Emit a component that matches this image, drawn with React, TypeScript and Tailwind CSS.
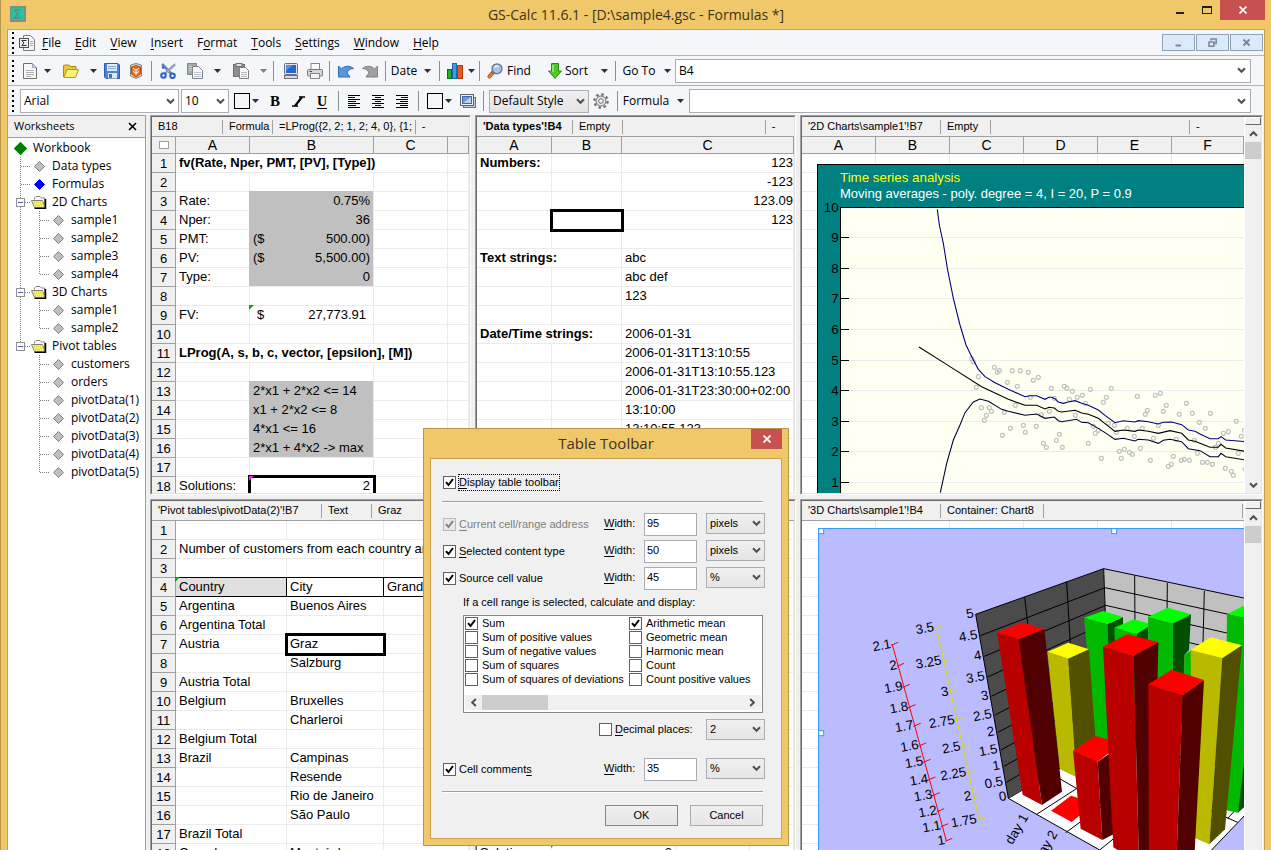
import type { ReactNode } from "react";

type CellData = {
  text?: string;
  span?: number;
  symbol?: string;
  className?: string;
  corner?: "green" | "magenta";
  selected?: boolean;
};
type Cell = string | CellData;

type Column = { label: string; width?: number };

const shade = "bg-[#c0c0c0] border-[#c0c0c0] shadow-[-1px_-1px_0_#c0c0c0]";
const heading = (text: string, span: number): CellData => ({ text, span, className: "font-bold" });
const right = (text: string, className = ""): CellData => ({ text, className: `text-right ${className}` });

const formulaRows: Cell[][] = [
  [heading("fv(Rate, Nper, PMT, [PV], [Type])", 3)],
  [],
  ["Rate:", right("0.75%", shade)],
  ["Nper:", right("36", shade)],
  ["PMT:", { symbol: "($", text: "500.00)", className: shade }],
  ["PV:", { symbol: "($", text: "5,500.00)", className: shade }],
  ["Type:", right("0", shade)],
  [],
  ["FV:", { symbol: "$", text: "27,773.91", corner: "green", className: "px-[7px]" }],
  [],
  [heading("LProg(A, s, b, c, vector, [epsilon], [M])", 3)],
  [],
  ["", { text: "2*x1 + 2*x2 <= 14", className: shade }],
  ["", { text: "x1 + 2*x2 <= 8", className: shade }],
  ["", { text: "4*x1 <= 16", className: shade }],
  ["", { text: "2*x1 + 4*x2 -> max", className: shade }],
  [],
  ["Solutions:", { text: "2", className: "text-right", corner: "magenta", selected: true }],
];

const flushRight = "text-right pr-0";

const dataTypeRows: Cell[][] = [
  [heading("Numbers:", 1), "", { text: "123", className: flushRight }],
  ["", "", { text: "-123", className: flushRight }],
  ["", "", { text: "123.09", className: flushRight }],
  ["", { selected: true }, { text: "123", className: flushRight }],
  [],
  [heading("Text strings:", 2), "abc"],
  ["", "", "abc def"],
  ["", "", "123"],
  [],
  [heading("Date/Time strings:", 2), "2006-01-31"],
  ["", "", "2006-01-31T13:10:55"],
  ["", "", "2006-01-31T13:10:55.123"],
  ["", "", "2006-01-31T23:30:00+02:00"],
  ["", "", "13:10:00"],
  ["", "", "13:10:55.123"],
  [],
  [],
  [],
];

const blackEdge = "border-b-black shadow-[0_-1px_0_black]";

const pivotRows: Cell[][] = [
  [],
  [{ text: "Number of customers from each country and city", span: 3 }],
  [],
  [
    { text: "Country", corner: "green", className: `bg-[#e0e0e0] border-r-black ${blackEdge}` },
    { text: "City", className: `border-r-black ${blackEdge}` },
    { text: "Grand Total", className: blackEdge },
  ],
  ["Argentina", "Buenos Aires"],
  ["Argentina Total"],
  ["Austria", { text: "Graz", selected: true }],
  ["", "Salzburg"],
  ["Austria Total"],
  ["Belgium", "Bruxelles"],
  ["", "Charleroi"],
  ["Belgium Total"],
  ["Brazil", "Campinas"],
  ["", "Resende"],
  ["", "Rio de Janeiro"],
  ["", "São Paulo"],
  ["Brazil Total"],
  ["Canada", "Montréal"],
];

const blank = (length: number): Cell[][] => Array.from({ length }, () => []);

const solutionRows: Cell[][] = [
  ...blank(17),
  ["Solutions:", { text: "2", className: "text-right", corner: "green" }],
];

const chartColumns: Column[] = [
  { label: "A", width: 74 },
  { label: "B", width: 74 },
  { label: "C", width: 74 },
  { label: "D", width: 74 },
  { label: "E", width: 74 },
  { label: "F" },
];

function Sheet({
  columns,
  rows,
  header = true,
  numbers = false,
}: {
  columns: Column[];
  rows: Cell[][];
  header?: boolean;
  numbers?: boolean;
}) {
  const fill = (row: Cell[]) => {
    const cells: CellData[] = row.map((c) => (typeof c === "string" ? { text: c } : c));
    const used = cells.reduce((n, c) => n + (c.span ?? 1), 0);
    return [...cells, ...Array.from({ length: columns.length - used }, (): CellData => ({}))];
  };

  const padding = (className = "") => {
    if (className.includes("px-")) return "";
    return className.includes("pr-0") ? "pl-[3px]" : "px-[3px]";
  };

  return (
    <table className="w-full table-fixed border-separate border-spacing-0 text-[13px] leading-[15px]">
      <colgroup>
        {numbers && <col style={{ width: 24 }} />}
        {columns.map((c, i) => (
          <col key={i} style={c.width ? { width: c.width } : undefined} />
        ))}
      </colgroup>
      {header && (
        <thead>
          <tr className="h-[17px] bg-[#f0f0f0] text-[14px] leading-4">
            {numbers && (
              <th className="border-r border-b border-[#a0a0a0] p-0">
                <span className="mx-auto block h-2 w-2.5 border border-[#a0a0a0] bg-white" />
              </th>
            )}
            {columns.map((c, i) => (
              <th key={i} className="h-[17px] overflow-hidden border-r border-b border-[#a0a0a0] p-0 font-normal">
                {c.label}
              </th>
            ))}
          </tr>
        </thead>
      )}
      <tbody>
        {rows.map((row, r) => (
          <tr key={r} className="h-[19px]">
            {numbers && (
              <th className="h-[19px] border-r border-b border-[#a0a0a0] bg-[#f0f0f0] p-0 text-center leading-[17px] font-normal">
                {r + 1}
              </th>
            )}
            {fill(row).map((c, i) => (
              <td
                key={i}
                colSpan={c.span}
                className={`relative h-[19px] border-r border-b border-[#ebebeb] p-0 ${
                  c.selected ? "z-10 outline-3 -outline-offset-1 outline-black" : ""
                } ${padding(c.className)} ${c.className ?? ""}`}
              >
                <div className={`h-[17px] overflow-hidden whitespace-nowrap ${c.symbol ? "flex justify-between" : ""}`}>
                  {c.symbol && <span>{c.symbol}</span>}
                  {c.symbol ? <span>{c.text}</span> : c.text}
                </div>
                {c.corner && (
                  <svg className="absolute -top-px -left-px h-[5px] w-[5px]" viewBox="0 0 5 5">
                    <path d="M0 0H5L0 5Z" fill={c.corner === "green" ? "#00b000" : "#ff20e0"} />
                  </svg>
                )}
              </td>
            ))}
          </tr>
        ))}
      </tbody>
    </table>
  );
}

function Chevron({ className = "" }: { className?: string }) {
  return (
    <svg className={`h-[7px] w-[9px] shrink-0 ${className}`} viewBox="0 0 9 7">
      <path d="M1 1.2 4.500 4.800 8 1.200" fill="none" stroke="#505050" strokeWidth="2" />
    </svg>
  );
}

type Field = { text: string; className: string };

function InfoBar({ fields, tail = true }: { fields: Field[]; tail?: boolean }) {
  return (
    <div className="flex h-5 shrink-0 items-center overflow-hidden border-b border-[#a0a0a0] bg-[#f0f0f0] text-[11px] whitespace-nowrap">
      {fields.map((f, i) => (
        <div key={i} className={`h-[14px] shrink-0 border-r border-[#a0a0a0] pl-1.5 leading-[13px] ${f.className}`}>
          {f.text}
        </div>
      ))}
      {tail && <div className="pl-1.5">-</div>}
    </div>
  );
}

function VerticalScrollbar() {
  return (
    <div className="flex w-[17px] shrink-0 flex-col items-center border-l border-white bg-[#f0f0f0]">
      <div className="h-2 w-full border border-t-white border-r-[#696969] border-b-[#696969] border-l-white" />
      <button aria-label="Scroll up" className="flex h-[17px] w-full items-center justify-center">
        <Chevron className="rotate-180" />
      </button>
      <div className="h-[17px] w-full bg-[#cdcdcd]" />
      <div className="flex-1" />
      <button aria-label="Scroll down" className="flex h-4 w-full items-center justify-center">
        <Chevron />
      </button>
    </div>
  );
}

function Pane({
  fields,
  scrollbar = false,
  tail,
  children,
}: {
  fields: Field[];
  scrollbar?: boolean;
  tail?: boolean;
  children: ReactNode;
}) {
  return (
    <section className="flex min-h-0 min-w-0 border border-t-[#a0a0a0] border-r-white border-b-white border-l-[#a0a0a0] font-['Liberation_Sans',Arial,sans-serif]">
      <div className="flex min-w-0 flex-1 border border-t-[#696969] border-r-[#e3e3e3] border-b-[#e3e3e3] border-l-[#696969] bg-white">
        <div className="flex min-w-0 flex-1 flex-col">
          <InfoBar fields={fields} tail={tail} />
          <div className="relative min-h-0 flex-1 overflow-hidden">{children}</div>
        </div>
        {scrollbar && <VerticalScrollbar />}
      </div>
    </section>
  );
}

/* ---- 2D chart, drawn in thirds of a pixel ---- */

const scatter = [
  530, 746, 535, 755, 550, 800, 544, 832, 559, 893, 574, 916, 568, 931, 583, 893, 589, 904, 598, 772, 607, 787, 613, 782,
  622, 976, 628, 907, 637, 817, 646, 955, 652, 782, 661, 886, 667, 829, 676, 782, 685, 946, 691, 967, 700, 787, 706, 862,
  715, 811, 724, 949, 730, 802, 739, 914, 745, 1000, 754, 1012, 763, 904, 769, 835, 778, 865, 784, 991, 793, 973, 802, 1012,
  808, 829, 816, 835, 823, 868, 832, 844, 841, 916, 847, 862, 862, 856, 871, 880, 880, 1000, 886, 838, 895, 949, 901, 970,
  910, 961, 919, 1045, 925, 877, 934, 862, 949, 835, 940, 940, 958, 946, 964, 967, 973, 1024, 979, 1045, 988, 1018, 997, 955,
  1003, 1027, 1012, 1033, 1018, 979, 1027, 859, 1036, 1015, 1042, 955, 1051, 913, 1057, 901, 1066, 1051, 1075, 985, 1081, 856,
  1090, 946, 1096, 850, 1105, 904, 1114, 886, 1120, 1069, 1129, 1063, 1135, 1039, 1144, 988, 1153, 913, 1159, 1051, 1168, 1048,
  1174, 880, 1183, 1051, 1192, 910, 1198, 991, 1207, 1030, 1213, 937, 1222, 1057, 1231, 955, 1237, 1057, 1246, 910, 1252, 1063,
  1261, 1012, 1270, 1000, 1285, 970, 1291, 1075, 1300, 965, 1309, 1084, 1315, 1096, 1324, 934, 1330, 1030, 1339, 979, 1348, 961,
  1350, 1078,
];

const levels = [
  ["10", 292],
  ["9", 382],
  ["8", 475],
  ["7", 565],
  ["6", 658],
  ["5", 751],
  ["4", 841],
  ["3", 934],
  ["2", 1024],
  ["1", 1117],
] as const;

function TimeSeriesChart() {
  return (
    <svg
      className="absolute top-[27px] left-[15px] h-[400px] w-[640px] font-['Liberation_Sans',Arial,sans-serif]"
      viewBox="66 162 1920 1200"
      fontSize="40"
    >
      <rect x="67.500" y="163.500" width="1940" height="1300" fill="#008080" stroke="#000" strokeWidth="3" />
      <rect x="136.500" y="292.500" width="1900" height="1200" fill="#fffff2" stroke="#000" strokeWidth="3" />
      <text x="135" y="216" fill="#ffff00">
        Time series analysis
      </text>
      <text x="135" y="264" fill="#fff" fontSize="39">
        Moving averages - poly. degree = 4, I = 20, P = 0.9
      </text>
      {levels.map(([label, y]) => (
        <g key={label}>
          {y > 292 && <path d={`M138 ${y + 0.5}H2000`} stroke="#ebebeb" strokeWidth="3" />}
          {y > 292 && <path d={`M136 ${y + 0.5}H162`} stroke="#000" strokeWidth="3" />}
          <text x="131" y={y + 14} textAnchor="end">
            {label}
          </text>
        </g>
      ))}
      {scatter.map((x, i) =>
        i % 2 ? null : <circle key={i} cx={x} cy={scatter[i + 1]} r="6" fill="none" stroke="#c0c0c0" strokeWidth="3.400" />
      )}
      <g fill="none" strokeWidth="3.200">
        <path
          stroke="#000080"
          d="M427 298 433 345 445 400 457 475 475 565 495 645 513 705 535 750 550 778 570 800 600 818 640 838 690 860 705 857 725 857 750 868 762 862 770 862 780 866 790 876 805 880 820 876 840 872 860 880 880 886 910 900 930 916 960 938 985 932 1020 936 1030 932 1060 935 1090 942 1105 937 1130 936 1160 944 1180 960 1200 964 1215 972 1245 986 1270 986 1278 980 1292 990 1350 995"
        />
        <path
          stroke="#000"
          d="M372 711 465 770 560 830 640 868 690 886 725 886 750 897 762 892 778 894 790 904 800 906 840 901 860 909 880 913 910 925 930 941 960 964 985 960 1020 964 1030 960 1060 964 1090 970 1125 962 1160 970 1180 990 1200 994 1215 1000 1245 1012 1270 1012 1278 1003 1292 1014 1350 1024"
        />
        <path
          stroke="#000030"
          d="M436 1148 455 1060 475 990 495 945 510 908 535 876 555 867 580 874 620 898 640 904 690 916 725 912 750 925 778 921 790 932 800 935 845 928 860 937 880 938 910 955 930 968 960 988 985 985 1020 993 1030 988 1060 990 1090 1000 1105 991 1125 988 1160 995 1180 1016 1215 1022 1245 1040 1270 1040 1278 1030 1292 1040 1350 1050"
        />
      </g>
    </svg>
  );
}

/* ---- 3D chart, same units ---- */

const faces: [string, string][] = [
  ["#00b900", "867,383 937,403 960,790 905,780"],
  ["#005000", "937,403 984,381 984,790 955,790"],
  ["#00ff00", "867,383 925,363 984,381 937,403"],
  ["#00b900", "958,413 1026,431 1026,700 968,700"],
  ["#005000", "1026,431 1060,405 1060,700 1026,700"],
  ["#00ff00", "958,413 1016,388 1060,400 1060,410 1026,431"],
  ["#00b900", "1168,495 1190,480 1200,700 1165,700"],
  ["#00b900", "1059,380 1134,400 1134,700 1066,700"],
  ["#005000", "1134,400 1188,373 1182,480 1168,495 1163,700 1134,700"],
  ["#00ff00", "1059,380 1118,353 1188,373 1134,400"],
  ["#00b900", "1296,373 1360,386 1360,790 1329,968 1290,960"],
  ["#005000", "1352,780 1360,780 1360,940 1329,968"],
  ["#00ff00", "1296,373 1360,340 1360,386"],
  ["#b9b900", "757,485 820,506 845,862 795,838"],
  ["#505000", "820,506 882,478 906,820 845,862"],
  ["#ffff00", "757,485 820,458 882,478 820,506"],
  ["#b9b900", "1187,480 1282,504 1243,1063 1190,1040"],
  ["#505000", "1282,504 1341,466 1290,1018 1243,1063"],
  ["#ffff00", "1187,480 1247,442 1341,466 1282,504"],
  ["#b90000", "606,427 671,447 741,945 683,914"],
  ["#500000", "671,447 748,417 801,905 741,945"],
  ["#ff0000", "606,427 681,397 748,417 671,447"],
  ["#ff0000", "768,962 828,917 900,940 830,996"],
  ["#b90000", "834,782 908,815 922,1050 857,1016"],
  ["#500000", "908,815 980,766 980,1020 922,1050"],
  ["#ff0000", "834,782 902,738 980,760 908,815"],
  ["#b90000", "924,470 1016,497 1032,1120 955,1072"],
  ["#500000", "1016,497 1090,457 1076,1120 1032,1120"],
  ["#ff0000", "924,470 998,432 1090,457 1016,497"],
  ["#b90000", "1060,583 1163,616 1144,1120 1062,1120"],
  ["#500000", "1163,616 1227,570 1197,1120 1144,1120"],
  ["#ff0000", "1060,583 1130,539 1227,570 1163,616"],
];

const valueAxis = [
  ["5", 542, 373], ["4.5", 553, 437], ["4", 565, 499], ["3.5", 575, 561], ["3", 586, 619], ["2.5", 596, 675],
  ["2", 604, 727], ["1.5", 613, 780], ["1", 621, 829], ["0.5", 630, 877], ["0", 640, 921],
] as const;

const redAxis = [
  ["2.1", 464], ["2", 527], ["1.9", 590], ["1.8", 651], ["1.7", 707], ["1.6", 766], ["1.5", 815], ["1.4", 868],
  ["1.3", 915], ["1.2", 963], ["1.1", 1008], ["1", 1052],
] as const;

const yellowAxis = [
  ["3.5", 412], ["3.25", 512], ["3", 605], ["2.75", 690], ["2.5", 770], ["2.25", 847], ["2", 918], ["1.75", 988],
] as const;

function AxisLabel({ x, y, children }: { x: number; y: number; children: ReactNode }) {
  return (
    <text x={x} y={y} textAnchor="end" transform={`rotate(-10 ${x} ${y})`}>
      {children}
    </text>
  );
}

function BarChart3D() {
  const redX = (y: number) => 292 + ((y - 464) * 162) / 588;
  const yellowX = (y: number) => 424 + ((y - 412) * 128) / 576;
  return (
    <svg
      className="absolute top-[7px] left-4 h-[400px] w-[640px] font-['Liberation_Sans',Arial,sans-serif]"
      viewBox="69 114 1920 1200"
      fontSize="40"
    >
      <rect x="70.500" y="115.500" width="2000" height="1300" fill="#bbbbff" stroke="#3399ff" strokeWidth="3" />
      <polygon points="640,925 940,750 1360,850 1360,965 1240,1090 1240,1120 990,1120 914,1080" fill="#fff" stroke="#000" strokeWidth="3" />
      <polygon points="542,373 926,236 945,740 640,925" fill="#4b4b4b" />
      <polygon points="926,236 1370,329 1370,840 945,740" fill="#c0c0c0" />
      <g fill="none" stroke="#000" strokeWidth="3">
        <path d="M542 373 926 236 1370 329M542 373 640 925M926 236 945 740" />
        <path d="M556 437 930 293 1370 388M568 499 932 346 1370 446M578 561 935 398 1370 503M589 619 938 450M600 675 940 500M609 727 941 550M618 780 942 600M627 829 943 650M634 877 944 696" />
        <path d="M689 322 745 800M815 275 845 780M1019 257 1022 760M1117 279 1112 780M1228 303 1215 810" />
        <path d="M725 973 900 860M812 1028 960 920M780 858 1000 985M914 1080 1000 1010M1150 920 1328 997M1298 985 1350 930" />
      </g>
      {faces.map(([fill, points], i) => (
        <polygon key={i} points={points} fill={fill} />
      ))}
      <g fill="none" strokeWidth="3">
        <path stroke="#ff0000" d="M292 464 454 1052" />
        <path stroke="#d8d800" d="M424 412 552 988" />
        {redAxis.map(([label, y]) => (
          <path key={label} stroke="#ff0000" d={`M${redX(y) - 4} ${y + 2}l22-9`} />
        ))}
        {yellowAxis.map(([label, y]) => (
          <path key={label} stroke="#d8d800" d={`M${yellowX(y) - 4} ${y + 2}l22-7`} />
        ))}
      </g>
      {redAxis.map(([label, y]) => (
        <AxisLabel key={label} x={redX(y) - 2} y={y + 10}>
          {label}
        </AxisLabel>
      ))}
      {yellowAxis.map(([label, y]) => (
        <AxisLabel key={label} x={yellowX(y) - 5} y={y + 11}>
          {label}
        </AxisLabel>
      ))}
      {valueAxis.map(([label, x, y]) => (
        <AxisLabel key={label} x={x - 4} y={y + 9}>
          {label}
        </AxisLabel>
      ))}
      <text transform="translate(652 1066) rotate(-60)">day 1</text>
      <text transform="translate(740 1116) rotate(-60)">day 2</text>
      <g fill="#fff" stroke="#3399ff" strokeWidth="3">
        <rect x="71" y="116" width="15" height="15" />
        <rect x="950" y="116" width="15" height="15" />
        <rect x="71" y="722" width="15" height="15" />
      </g>
    </svg>
  );
}

/* ---- worksheet tree ---- */

function Diamond({ color = "#c0c0c0", big = false }: { color?: string; big?: boolean }) {
  return (
    <svg className={big ? "h-[13px] w-[13px]" : "h-[11px] w-[11px]"} viewBox="0 0 11 11">
      <path d="M5.500.5 10.500 5.500 5.500 10.500.5 5.500Z" fill={color} stroke={color === "#c0c0c0" ? "#808080" : color} />
    </svg>
  );
}

function FolderNode() {
  return (
    <svg className="h-[13px] w-4" viewBox="0 0 16 13">
      <path d="M3.500 3.500V2L5 .5H9L10.500 2H13.500V11" fill="#fff" stroke="#808080" />
      <path d="M.5 4.500H11.500L14 11.500H3.500Z" fill="#f4f4a8" stroke="#808080" />
      <path d="M2.500 6.500H11.500M3.500 8.500H12M4 10.500H13" stroke="#e8e000" strokeDasharray="1 1" />
      <path d="M3 5.500H11.500M3 7.500H12M4 9.500H12.500" stroke="#e8e000" strokeDasharray="1 1" />
      <path d="M14.500 3V12.500H3.500" fill="none" stroke="#000" strokeWidth="1.500" />
    </svg>
  );
}

function Guide({ v, h, box }: { v: "none" | "full" | "half"; h?: boolean; box?: boolean }) {
  return (
    <svg className="h-[18px] w-[19px] shrink-0" viewBox="0 0 19 18">
      <g stroke="#808080" strokeDasharray="1 1">
        {v !== "none" && <path d={v === "full" ? "M9.500 0V18" : "M9.500 0V9"} />}
        {h && <path d="M10 9.500H19" />}
      </g>
      {box && (
        <>
          <rect x="5.500" y="5.500" width="8" height="8" fill="#fff" stroke="#919191" />
          <path d="M7 9.500H12" stroke="#4060a0" />
        </>
      )}
    </svg>
  );
}

const tree: { name: string; color?: string; children?: string[] }[] = [
  { name: "Data types" },
  { name: "Formulas", color: "#0000ff" },
  { name: "2D Charts", children: ["sample1", "sample2", "sample3", "sample4"] },
  { name: "3D Charts", children: ["sample1", "sample2"] },
  {
    name: "Pivot tables",
    children: ["customers", "orders", "pivotData(1)", "pivotData(2)", "pivotData(3)", "pivotData(4)", "pivotData(5)"],
  },
];

function TreeRow({ icon, children, guides }: { icon: ReactNode; children: string; guides?: ReactNode }) {
  return (
    <div className="flex h-[18px] items-center whitespace-nowrap">
      {guides}
      <span className="mr-1 flex w-[18px] shrink-0 justify-center">{icon}</span>
      {children}
    </div>
  );
}

function Sidebar() {
  return (
    <aside className="flex w-[138px] shrink-0 flex-col border-t border-r border-[#a0a0a0] bg-white text-[12px]">
      <div className="flex h-[22px] shrink-0 items-center justify-between border-b border-[#a0a0a0] bg-[#f0f0f0] pr-2 pl-1.5 text-[11px]">
        Worksheets
        <button aria-label="Close panel">
          <svg className="h-[9px] w-[9px]" viewBox="0 0 9 9">
            <path d="M1 1 8 8M8 1 1 8" stroke="#000" strokeWidth="1.600" />
          </svg>
        </button>
      </div>
      <div className="pt-px pl-[3px]">
        <TreeRow icon={<Diamond color="#008000" big />}>Workbook</TreeRow>
        <ul>
          {tree.map((node, i) => {
            const last = i === tree.length - 1;
            return (
              <li key={node.name}>
                <TreeRow
                  guides={<Guide v={last ? "half" : "full"} h box={!!node.children} />}
                  icon={node.children ? <FolderNode /> : <Diamond color={node.color} />}
                >
                  {node.name}
                </TreeRow>
                {node.children && (
                  <ul>
                    {node.children.map((child, j) => (
                      <li key={child}>
                        <TreeRow
                          guides={
                            <>
                              <Guide v={last ? "none" : "full"} />
                              <Guide v={j === node.children!.length - 1 ? "half" : "full"} h />
                            </>
                          }
                          icon={<Diamond />}
                        >
                          {child}
                        </TreeRow>
                      </li>
                    ))}
                  </ul>
                )}
              </li>
            );
          })}
        </ul>
      </div>
    </aside>
  );
}

/* ---- toolbars ---- */

function Grip() {
  return (
    <svg className="mr-[6px] ml-1 h-6 w-0.5 shrink-0" viewBox="0 0 2 24">
      <path d="M1 1V24" stroke="#000" strokeWidth="2" strokeDasharray="2 3" />
    </svg>
  );
}

function Separator() {
  return (
    <div className="flex h-5 w-2 shrink-0 justify-center">
      <div className="w-px bg-[#909090]" />
    </div>
  );
}

function Tool({ label, className, children }: { label: string; className: string; children: ReactNode }) {
  return (
    <button aria-label={label} className={`flex h-6 shrink-0 items-center justify-center ${className}`}>
      {children}
    </button>
  );
}

function Arrow({ muted = false }: { muted?: boolean }) {
  return (
    <svg className="h-1 w-[7px]" viewBox="0 0 7 4">
      <path d="M0 0H7L3.500 4Z" fill={muted ? "#808080" : "#303030"} />
    </svg>
  );
}

function Icon({ children }: { children: ReactNode }) {
  return (
    <svg className="h-4 w-4 shrink-0" viewBox="0 0 16 16" fill="none">
      {children}
    </svg>
  );
}

const NewIcon = () => (
  <Icon>
    <path d="M1.500.5H10.500L14.500 4.500V15.500H1.500Z" fill="#f6f7f8" stroke="#707070" />
    <path d="M10.500.5V4.500H14.500" fill="#cdd9ea" stroke="#8fa6c4" />
    <path d="M4 7.500H12M4 9.500H12M4 11.500H12M4 13.500H9" stroke="#b0b0b0" />
  </Icon>
);

const OpenIcon = () => (
  <Icon>
    <path d="M.5 14V3L1.500 2H6L7.500 3.500H13V6" fill="#e8c531" stroke="#a88a12" />
    <path d="M1 14.500 4 6.500H15.500L12.500 14.500Z" fill="#fbf07a" stroke="#b59a1c" />
  </Icon>
);

const SaveIcon = () => (
  <Icon>
    <path d="M.5.5H14L15.500 2V15.500H2L.5 14Z" fill="#4b82d8" stroke="#2d5dab" />
    <rect x="3" y="1" width="10" height="7" fill="#dfeafc" />
    <path d="M4 3.500H12M4 5.500H12" stroke="#86a9dd" />
    <rect x="4" y="10" width="9" height="5.500" fill="#e4e6ea" />
    <rect x="5" y="11" width="3" height="4" fill="#3b6fbf" />
  </Icon>
);

const ShieldIcon = () => (
  <Icon>
    <path d="M2.500 2 8 .5 13.500 2V13L8 15.500 2.500 13Z" fill="#dcd4cc" stroke="#8a8580" />
    <path d="M3.500 4 8 2.500 12.500 4V11L8 14 3.500 11Z" fill="#e07020" stroke="#b85010" />
    <path d="M5 5.500 8 7 11 5.500M8 7V12M5 8.500 8 10 11 8.500" stroke="#fff" />
  </Icon>
);

const CutIcon = () => (
  <Icon>
    <path d="M2 1 11.500 11" stroke="#5f86c4" strokeWidth="2.600" />
    <path d="M15 1.500 5 10.500" stroke="#a9b7c8" strokeWidth="2.800" />
    <path d="M15.500.8 5 10" stroke="#6d7c90" strokeWidth=".8" />
    <circle cx="3.500" cy="12.500" r="2.300" stroke="#2a62c8" strokeWidth="2" />
    <circle cx="12.500" cy="12.800" r="2.300" stroke="#2a62c8" strokeWidth="2" />
    <path d="M2 4 4 5" stroke="#2a62c8" strokeWidth="2" />
  </Icon>
);

const CopyIcon = () => (
  <Icon>
    <path d="M.5.500H9.500V11.500H.5Z" fill="#a8a8a8" stroke="#888" />
    <path d="M2 3.500H8M2 5.500H8M2 7.500H8" stroke="#d0d0d0" />
    <path d="M5.500 3.500H11.500L15.500 7.500V15.500H5.500Z" fill="#f8f8f8" stroke="#808080" />
    <path d="M7 9.500H14M7 11.500H14M7 13.500H14" stroke="#b8c4d8" />
  </Icon>
);

const PasteIcon = () => (
  <Icon>
    <rect x=".5" y="1.500" width="11" height="12" fill="#8e8e8e" stroke="#707070" />
    <rect x="3" y=".5" width="6" height="3" fill="#e0e0e0" stroke="#707070" />
    <path d="M6.500 4.500H12.500L15.500 7.500V15.500H6.500Z" fill="#f8f8f8" stroke="#808080" />
    <path d="M8 9.500H14M8 11.500H14M8 13.500H14" stroke="#b8b8b8" />
  </Icon>
);

const MonitorIcon = () => (
  <Icon>
    <rect x="1.500" y=".5" width="13" height="11" rx="1" fill="#e0e3e8" stroke="#6c7078" />
    <rect x="3" y="2" width="10" height="8" fill="#2a62d0" />
    <path d="M3 2H10L3 8Z" fill="#5b8fea" />
    <rect x="1.500" y="12.500" width="13" height="3" fill="#d8dade" stroke="#6c7078" />
  </Icon>
);

const PrinterIcon = () => (
  <Icon>
    <rect x="4" y=".5" width="8.500" height="7" fill="#fff" stroke="#888" />
    <rect x=".5" y="6.500" width="15" height="6.500" rx="1" fill="#d4d6da" stroke="#777" />
    <rect x="3.500" y="10.500" width="9" height="5" fill="#f4f4f4" stroke="#888" />
    <path d="M2.500 8.500H5" stroke="#444" />
  </Icon>
);

const UndoIcon = ({ color = "#5b95dc", edge = "#2a68b8" }) => (
  <Icon>
    <path
      d="M.5 3 3.500 6C6 3 11 2 15.500 5.500 12 5.500 10 7.500 9 10L12 14H.5Z"
      fill={color}
      stroke={edge}
      strokeLinejoin="round"
    />
  </Icon>
);

const BarsIcon = () => (
  <Icon>
    <rect x=".5" y="6.500" width="4" height="9" fill="#20b030" stroke="#0a7018" />
    <rect x="5.500" y=".5" width="4" height="15" fill="#3c9be8" stroke="#1668b0" />
    <rect x="10.500" y="2.500" width="5" height="13" fill="#e85a18" stroke="#b03c08" />
  </Icon>
);

const FindIcon = () => (
  <Icon>
    <path d="M6.500 9 2.500 13.500" stroke="#7a4a20" strokeWidth="4" strokeLinecap="round" />
    <path d="M5 11 2.500 13.800" stroke="#e8792a" strokeWidth="3" strokeLinecap="round" />
    <circle cx="10" cy="5.800" r="4.900" fill="#a9c6ee" stroke="#6b7a92" strokeWidth="1.500" />
    <path d="M7.500 4.500C8.500 3 10 2.600 11.500 3" stroke="#fff" strokeWidth="1.200" />
  </Icon>
);

const SortIcon = () => (
  <Icon>
    <path d="M4.500.5H11.500V8H14.500L8 15.500 1.500 8H4.500Z" fill="#4cc828" stroke="#2a8a10" />
    <path d="M6 2V9" stroke="#a8f080" strokeWidth="1.500" />
  </Icon>
);

const SlidesIcon = () => (
  <Icon>
    <rect x="3.500" y="4.500" width="12" height="10" fill="#c8ccd4" stroke="#707478" />
    <rect x=".5" y="1.500" width="13" height="11" fill="#eef0f4" stroke="#606468" />
    <rect x="2.500" y="3.500" width="9" height="7" fill="#6a96e0" stroke="#4068b0" />
    <path d="M3 10 11 4V10Z" fill="#b8d0f6" />
  </Icon>
);

const GearIcon = () => (
  <Icon>
    <circle cx="8" cy="8" r="6.700" stroke="#707070" strokeWidth="2.200" strokeDasharray="2.600 2.660" />
    <circle cx="8" cy="8" r="5" fill="#e6e6e6" stroke="#707070" />
    <circle cx="8" cy="8" r="2.300" fill="#f4f6f8" stroke="#707070" />
  </Icon>
);

const AlignIcon = ({ d }: { d: string }) => (
  <svg className="h-[13px] w-3" viewBox="0 0 12 13">
    <path d={d} stroke="#000" />
  </svg>
);

function SwatchTool({ label }: { label: string }) {
  return (
    <button aria-label={label} className="flex h-6 w-[35px] shrink-0 items-center justify-center gap-0.5">
      <span className="h-4 w-4 border border-black" />
      <Arrow />
    </button>
  );
}

const buttonFace = "bg-linear-to-b from-[#f0f0f0] to-[#e5e5e5]";

function Combo({
  label,
  value,
  className,
  look = "bg-white",
}: {
  label: string;
  value: string;
  className: string;
  look?: string;
}) {
  return (
    <div className={`relative flex shrink-0 items-center ${className}`}>
      <select aria-label={label} defaultValue={value} className={`h-full w-full appearance-none border border-[#abadb3] pl-[3px] ${look}`}>
        <option>{value}</option>
      </select>
      <Chevron className="pointer-events-none absolute right-1" />
    </div>
  );
}

function AddressBox({ label, value }: { label: string; value: string }) {
  return (
    <div className="mr-[13px] flex h-6 min-w-0 flex-1 items-center border border-[#abadb3] bg-white pr-1">
      <input aria-label={label} defaultValue={value} className="h-full min-w-0 flex-1 pl-[3px] outline-none" />
      <Chevron />
    </div>
  );
}

/* key letter is underlined: "F|o|rmat" */
function Mnemonic({ text }: { text: string }) {
  const [before, key, after] = text.split("|");
  return (
    <>
      {before}
      {key && <span className="underline underline-offset-2">{key}</span>}
      {after}
    </>
  );
}

const menus = ["|F|ile", "|E|dit", "|V|iew", "|I|nsert", "F|o|rmat", "|T|ools", "|S|ettings", "|W|indow", "|H|elp"];

function MdiButton({ label, children }: { label: string; children: ReactNode }) {
  return (
    <button aria-label={label} className="flex h-[17px] w-[33px] items-center justify-center border border-[#8fa3b7] bg-[#dbe9f8]">
      <svg className="h-[9px] w-[9px]" viewBox="0 0 9 9" fill="none" stroke="#788898" strokeWidth="1.500">
        {children}
      </svg>
    </button>
  );
}

function MenuBar() {
  return (
    <nav className="flex h-[26px] shrink-0 items-center border-b border-[#b0b4ba]">
      <Grip />
      <span className="flex w-4 -ml-px justify-center">
        <Icon>
          <path d="M4.500.5H11.500L15.500 4.500V15.500H4.500Z" fill="#f4f4f4" stroke="#808080" />
          <path d="M11 6.500H14M11 8.500H14M11 10.500H14" stroke="#b0b0b0" />
          <rect x=".5" y="3.500" width="9" height="9" fill="#f0f0f0" stroke="#505050" />
          <path d="M7.500 5.500H2.800L5 8 2.800 10.500H7.500" stroke="#303030" />
        </Icon>
      </span>
      {menus.map((m) => (
        <button key={m} className="px-[7px]">
          <Mnemonic text={m} />
        </button>
      ))}
      <div className="mr-px ml-auto flex gap-px">
        <MdiButton label="Minimize sheet">
          <path d="M1.500 7.500H7" strokeWidth="2" />
        </MdiButton>
        <MdiButton label="Restore sheet">
          <path d="M1 4H6V8.200H1ZM3 2.500V1H8.200V5.500H6.500" />
        </MdiButton>
        <MdiButton label="Close sheet">
          <path d="M1.500 1.500 7.500 7.500M7.500 1.500 1.500 7.500" strokeWidth="2" />
        </MdiButton>
      </div>
    </nav>
  );
}

function StandardToolbar() {
  return (
    <div className="flex h-[30px] shrink-0 items-center border-b border-[#b0b4ba]">
      <Grip />
      <Tool label="New" className="w-5"><NewIcon /></Tool>
      <Tool label="New options" className="w-[15px]"><Arrow /></Tool>
      <Tool label="Open" className="w-8"><OpenIcon /></Tool>
      <Tool label="Open options" className="w-3"><Arrow /></Tool>
      <Tool label="Save" className="w-[26px]"><SaveIcon /></Tool>
      <Tool label="Protect" className="w-[22px]"><ShieldIcon /></Tool>
      <Separator />
      <Tool label="Cut" className="w-[26px]"><CutIcon /></Tool>
      <Tool label="Copy" className="w-7"><CopyIcon /></Tool>
      <Tool label="Copy options" className="w-4"><Arrow /></Tool>
      <Tool label="Paste" className="w-8"><PasteIcon /></Tool>
      <Tool label="Paste options" className="w-3"><Arrow muted /></Tool>
      <Separator />
      <Tool label="Preview" className="w-7"><MonitorIcon /></Tool>
      <Tool label="Print" className="w-5"><PrinterIcon /></Tool>
      <Separator />
      <Tool label="Undo" className="w-[26px]"><UndoIcon /></Tool>
      <Tool label="Redo" className="w-[22px]">
        <span className="-scale-x-100"><UndoIcon color="#a0a0a0" edge="#808080" /></span>
      </Tool>
      <Separator />
      <Tool label="Date" className="w-[30px]">Date</Tool>
      <Tool label="Date options" className="w-4"><Arrow /></Tool>
      <Separator />
      <Tool label="Chart" className="w-6"><BarsIcon /></Tool>
      <Tool label="Chart options" className="w-2"><Arrow /></Tool>
      <Separator />
      <button className="flex h-6 w-[60px] shrink-0 items-center gap-1 pl-1">
        <FindIcon />
        Find
      </button>
      <button className="flex h-6 w-[54px] shrink-0 items-center gap-0.5 pl-1">
        <SortIcon />
        Sort
      </button>
      <Tool label="Sort options" className="w-[14px]"><Arrow /></Tool>
      <Separator />
      <Tool label="Go To" className="w-10">Go To</Tool>
      <Tool label="Go To options" className="w-4"><Arrow /></Tool>
      <AddressBox label="Go to address" value="B4" />
    </div>
  );
}

function FormatToolbar() {
  return (
    <div className="flex h-[29px] shrink-0 items-center pt-px">
      <Grip />
      <Combo label="Font" value="Arial" className="mr-0.5 h-6 w-[159px]" />
      <Combo label="Font size" value="10" className="h-6 w-12" />
      <SwatchTool label="Border" />
      <Tool label="Bold" className="w-[22px] font-['Liberation_Serif',serif] text-[15px] font-bold">B</Tool>
      <Tool label="Italic" className="w-6">
        <svg className="h-[11px] w-[13px]" viewBox="0 0 13 11" fill="none" stroke="#000">
          <path d="M7 1H13M0 10H6" strokeWidth="1.500" />
          <path d="M10 1 3 10" strokeWidth="2.200" />
        </svg>
      </Tool>
      <Tool label="Underline" className="w-6 font-['Liberation_Serif',serif] text-[14px] font-bold underline underline-offset-2">U</Tool>
      <Separator />
      <Tool label="Align left" className="w-6"><AlignIcon d="M0 .5H12M0 2.500H7M0 4.500H12M0 6.500H8M0 8.500H12M0 10.500H8M0 12.500H12" /></Tool>
      <Tool label="Align center" className="w-6"><AlignIcon d="M0 .5H12M3 2.500H9M0 4.500H12M3 6.500H9M0 8.500H12M3 10.500H9M0 12.500H12" /></Tool>
      <Tool label="Align right" className="w-6"><AlignIcon d="M0 .5H12M5 2.500H12M0 4.500H12M4 6.500H12M0 8.500H12M4 10.500H12M0 12.500H12" /></Tool>
      <Separator />
      <SwatchTool label="Fill color" />
      <Tool label="Styles" className="w-[22px]"><SlidesIcon /></Tool>
      <Separator />
      <Combo label="Cell style" value="Default Style" className="ml-0.5 h-[23px] w-[100px]" look={buttonFace} />
      <Tool label="Style options" className="w-6"><GearIcon /></Tool>
      <Separator />
      <Tool label="Formula" className="w-[50px]">Formula</Tool>
      <Tool label="Formula options" className="w-[18px]"><Arrow /></Tool>
      <AddressBox label="Formula text" value="" />
    </div>
  );
}

function TitleBar() {
  return (
    <header className="grid h-[29px] shrink-0 grid-cols-[1fr_auto_1fr] items-start text-[#3c3320]">
      <svg className="mt-1.5 ml-[3px] h-4 w-4" viewBox="0 0 16 16">
        <rect x="1" y="1" width="14" height="14" fill="#20c8a0" stroke="#7c9088" strokeWidth="2" />
        <path d="M11.500 4H4.500L8 8 4.500 12H11.500" fill="none" stroke="#68887c" strokeWidth="1.500" />
      </svg>
      <h1 className="text-[14px] leading-[29px]">GS-Calc 11.6.1 - [D:\sample4.gsc - Formulas *]</h1>
      <div className="flex justify-end">
        <button aria-label="Minimize" className="flex h-5 w-7 items-end justify-center pb-1.5">
          <span className="h-0.5 w-2 bg-[#202020]" />
        </button>
        <button aria-label="Maximize" className="flex h-5 w-[26px] items-center justify-center">
          <span className="h-2 w-2.5 border border-t-2 border-[#202020]" />
        </button>
        <button aria-label="Close" className="flex h-5 w-[45px] items-center justify-center bg-[#c75050]">
          <CloseGlyph />
        </button>
      </div>
    </header>
  );
}

function CloseGlyph() {
  return (
    <svg className="h-2 w-2" viewBox="0 0 8 8">
      <path d="M.5.5 7.500 7.500M7.500.5.500 7.500" stroke="#fff" strokeWidth="1.700" />
    </svg>
  );
}

/* ---- table toolbar dialog ---- */

function CheckBox({
  label,
  checked = false,
  disabled = false,
  focused = false,
  gap = "gap-[3px]",
}: {
  label: string;
  checked?: boolean;
  disabled?: boolean;
  focused?: boolean;
  gap?: string;
}) {
  return (
    <label className={`flex items-center whitespace-nowrap ${gap} ${disabled ? "text-[#808080]" : ""}`}>
      <span className="grid h-[13px] w-[13px] shrink-0">
        <input
          type="checkbox"
          defaultChecked={checked}
          disabled={disabled}
          className="peer h-[13px] w-[13px] appearance-none border border-[#606060] bg-white [grid-area:1/1] disabled:border-[#b8b8b8] disabled:bg-[#e8e8e8]"
        />
        <svg className="pointer-events-none invisible h-[13px] w-[13px] [grid-area:1/1] peer-checked:visible" viewBox="0 0 13 13">
          <path d="M3 6.200 5.500 9 10 3" fill="none" stroke={disabled ? "#808080" : "#000"} strokeWidth="2" />
        </svg>
      </span>
      <span className={focused ? "h-[15px] outline outline-dotted outline-black" : ""}>
        <Mnemonic text={label} />
      </span>
    </label>
  );
}

function WidthRow({
  name,
  label,
  value,
  unit,
  disabled = false,
}: {
  name: string;
  label: string;
  value: string;
  unit: string;
  disabled?: boolean;
}) {
  return (
    <div className="grid h-[23px] grid-cols-[161px_40px_62px_59px]">
      <CheckBox label={label} checked disabled={disabled} />
      <label htmlFor={name} className="pt-[3px]">
        <Mnemonic text="|W|idth:" />
      </label>
      <input id={name} defaultValue={value} className="h-[23px] w-[53px] border border-[#abadb3] bg-white pb-1 pl-0.5" />
      <Combo label={`${name} unit`} value={unit} className="h-[21px]" look={buttonFace} />
    </div>
  );
}

const statistics = [
  ["Sum", "Sum of positive values", "Sum of negative values", "Sum of squares", "Sum of squares of deviations"],
  ["Arithmetic mean", "Geometric mean", "Harmonic mean", "Count", "Count positive values"],
];

function Rule({ className }: { className: string }) {
  return <hr className={`-ml-px w-[321px] border-t border-b border-t-[#a0a0a0] border-b-white ${className}`} />;
}

function TableToolbarDialog() {
  return (
    <div
      role="dialog"
      aria-labelledby="dialog-title"
      className="absolute top-[428px] left-[422px] z-20 w-[366px] border border-[#b8974a] bg-[#f0c869] px-1.5 pb-1.5"
    >
      <div className="relative h-[29px] text-center">
        <h2 id="dialog-title" className="text-[15px] leading-[28px] text-[#3c3320]">
          Table Toolbar
        </h2>
        <button aria-label="Close dialog" className="absolute top-0 right-0 flex h-5 w-[31px] items-center justify-center bg-[#c75050]">
          <CloseGlyph />
        </button>
      </div>
      <form className="border border-[#c9a04e] bg-[#f0f0f0] px-3 pt-4 pb-3 font-['Liberation_Sans',Arial,sans-serif] text-[11px] leading-[15px]">
        <div className="flex h-[15px]">
          <CheckBox label="|D|isplay table toolbar" checked focused />
        </div>
        <Rule className="mt-[11px] mb-2.5" />
        <div className="flex flex-col gap-1">
          <WidthRow name="address-width" label="|C|urrent cell/range address" value="95" unit="pixels" disabled />
          <WidthRow name="type-width" label="|S|elected content type" value="50" unit="pixels" />
          <WidthRow name="value-width" label="Source cell value" value="45" unit="%" />
        </div>
        <p className="flex h-[25px] items-center pl-5">If a cell range is selected, calculate and display:</p>
        <fieldset className="ml-5 flex h-[98px] w-[300px] flex-col justify-between border border-[#828790] bg-white p-px pb-0.5">
          <div className="grid grid-cols-[164px_1fr]">
            {statistics.map((column, i) => (
              <div key={i} className="flex flex-col gap-px">
                {column.map((name, j) => (
                  <div key={name} className="h-[13px]">
                    <CheckBox label={name} checked={j === 0} gap="h-[13px] gap-1" />
                  </div>
                ))}
              </div>
            ))}
          </div>
          <div className="flex h-[15px] items-center justify-between bg-[#f0f0f0] px-1">
            <div className="flex h-full items-center gap-1">
              <Chevron className="rotate-90" />
              <div className="h-full w-[66px] bg-[#cdcdcd]" />
            </div>
            <Chevron className="-rotate-90" />
          </div>
        </fieldset>
        <div className="mt-1.5 flex h-[21px] w-[322px] items-center justify-between pl-[156px]">
          <CheckBox label="|D|ecimal places:" />
          <Combo label="Decimal places" value="2" className="h-[21px] w-[59px]" look={buttonFace} />
        </div>
        <div className="mt-[18px]">
          <WidthRow name="comment-width" label="Cell comment|s|" value="35" unit="%" />
        </div>
        <Rule className="mt-2.5 mb-3" />
        <div className="flex justify-end gap-3 pr-1.5 leading-[19px]">
          <button type="button" className={`h-[21px] w-[73px] border border-[#3399ff] ${buttonFace}`}>
            OK
          </button>
          <button type="button" className={`h-[21px] w-[73px] border border-[#acacac] ${buttonFace}`}>
            Cancel
          </button>
        </div>
      </form>
    </div>
  );
}

export default function App() {
  return (
    <div className="relative flex h-screen flex-col overflow-hidden border-l border-[#b8974a] bg-[#f0c869] px-1.5 font-['Open_Sans','Noto_Sans',sans-serif] text-[12px] text-black">
      <TitleBar />
      {/* the window runs on below the screen edge */}
      <main className="flex h-[calc(100vh+71px)] shrink-0 flex-col border border-[#c9a04e] bg-[#f4f6f9]">
        <MenuBar />
        <StandardToolbar />
        <FormatToolbar />
        <div className="flex min-h-0 flex-1 bg-[#f0f0f0]">
          <Sidebar />
          <div className="ml-1 grid min-w-0 flex-1 grid-cols-[321fr_321fr_463fr] grid-rows-[380fr_450fr] gap-1 pr-px">
            <Pane
              fields={[
                { text: "B18", className: "w-[71px]" },
                { text: "Formula", className: "w-[50px]" },
                { text: "=LProg({2, 2; 1, 2; 4, 0}, {1;", className: "w-[45%]" },
              ]}
            >
              <Sheet
                numbers
                columns={[{ label: "A", width: 74 }, { label: "B", width: 124 }, { label: "C", width: 74 }, { label: "" }]}
                rows={formulaRows}
              />
            </Pane>
            <Pane
              fields={[
                { text: "'Data types'!B4", className: "w-24 font-bold" },
                { text: "Empty", className: "w-[50px]" },
                { text: "", className: "w-[45%]" },
              ]}
            >
              <Sheet columns={[{ label: "A", width: 75 }, { label: "B", width: 70 }, { label: "C" }]} rows={dataTypeRows} />
            </Pane>
            <Pane
              scrollbar
              fields={[
                { text: "'2D Charts\\sample1'!B7", className: "w-[139px]" },
                { text: "Empty", className: "w-[50px]" },
                { text: "", className: "w-[45%]" },
              ]}
            >
              <Sheet columns={chartColumns} rows={blank(18)} />
              <TimeSeriesChart />
            </Pane>
            <Pane
              tail={false}
              fields={[
                { text: "'Pivot tables\\pivotData(2)'!B7", className: "w-[170px]" },
                { text: "Text", className: "w-[50px]" },
                { text: "Graz", className: "flex-1" },
              ]}
            >
              <Sheet
                header={false}
                numbers
                columns={[{ label: "A", width: 111 }, { label: "B", width: 97 }, { label: "C" }]}
                rows={pivotRows}
              />
            </Pane>
            <Pane fields={[]} tail={false}>
              <Sheet
                header={false}
                columns={[{ label: "A", width: 75 }, { label: "B", width: 124 }, { label: "C", width: 74 }, { label: "D" }]}
                rows={solutionRows}
              />
            </Pane>
            <Pane
              scrollbar
              fields={[
                { text: "'3D Charts\\sample1'!B4", className: "w-[139px]" },
                { text: "Container: Chart8", className: "w-[103px]" },
                { text: "", className: "w-[45%]" },
              ]}
              tail={false}
            >
              <Sheet header={false} columns={chartColumns} rows={blank(18)} />
              <BarChart3D />
            </Pane>
          </div>
        </div>
      </main>
      <TableToolbarDialog />
    </div>
  );
}
